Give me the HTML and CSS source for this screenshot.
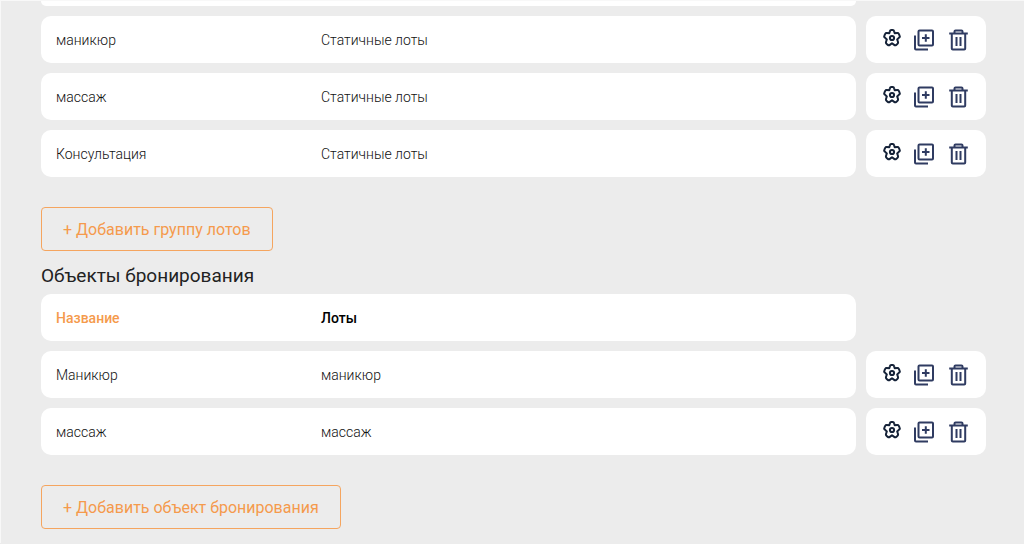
FILE: index.html
```html
<!DOCTYPE html>
<html lang="ru">
  <head>
    <meta charset="UTF-8" />
    <title>Объекты бронирования</title>
    <link rel="stylesheet" href="styles.css">
  </head>
  <body>
    <svg class="sprite" aria-hidden="true">
      <symbol id="icon-settings" viewBox="0 0 18 18">
        <path d="M6.9 2.200Q7.200 1 8.200 1H9.800Q10.800 1 11.100 2.200L11.700 4.300L14.200 4Q15.300 3.900 15.800 4.900L16.500 6.400Q17.200 7.600 16.300 8.400L14.200 10.500L15 13Q15.300 14.200 14.300 15L13.200 15.900Q12.200 16.700 11.200 15.900L9 14.300L6.800 15.900Q5.800 16.700 4.800 15.900L3.700 15Q2.700 14.200 3 13L3.800 10.500L1.700 8.400Q.8 7.600 1.500 6.400L2.200 4.900Q2.700 3.900 3.800 4L6.300 4.300Z" />
        <circle cx="9" cy="9" r="2.100" />
      </symbol>
      <symbol id="icon-copy" viewBox="0 0 20 22">
        <rect x="4.500" y="1.500" width="14.500" height="15" rx="1" />
        <path d="M11.800 5.300V12.700M8 9H15.500M1 6.500V19.500Q1 20.500 2 20.500H14" />
      </symbol>
      <symbol id="icon-trash" viewBox="0 0 22 22">
        <path d="M2.200 4.500H20.800M7.500 4V2.500Q7.500 1.500 8.500 1.500H14.500Q15.500 1.500 15.500 2.500V4M4.800 5V19.500Q4.800 20.500 5.800 20.500H17.200Q18.200 20.500 18.200 19.500V5M9.500 8V17M13.500 8V17" />
      </symbol>
    </svg>

    <main class="content">
      <div class="row-end"></div>

      <table class="list">
        <tbody>
          <tr>
            <td class="name">маникюр</td>
            <td class="lots">Статичные лоты</td>
            <td class="actions">
              <div class="card">
                <button class="settings" aria-label="Настройки"><svg><use href="#icon-settings" /></svg></button>
                <button class="copy" aria-label="Копировать"><svg><use href="#icon-copy" /></svg></button>
                <button class="trash" aria-label="Удалить"><svg><use href="#icon-trash" /></svg></button>
              </div>
            </td>
          </tr>
          <tr>
            <td class="name">массаж</td>
            <td class="lots">Статичные лоты</td>
            <td class="actions">
              <div class="card">
                <button class="settings" aria-label="Настройки"><svg><use href="#icon-settings" /></svg></button>
                <button class="copy" aria-label="Копировать"><svg><use href="#icon-copy" /></svg></button>
                <button class="trash" aria-label="Удалить"><svg><use href="#icon-trash" /></svg></button>
              </div>
            </td>
          </tr>
          <tr>
            <td class="name">Консультация</td>
            <td class="lots">Статичные лоты</td>
            <td class="actions">
              <div class="card">
                <button class="settings" aria-label="Настройки"><svg><use href="#icon-settings" /></svg></button>
                <button class="copy" aria-label="Копировать"><svg><use href="#icon-copy" /></svg></button>
                <button class="trash" aria-label="Удалить"><svg><use href="#icon-trash" /></svg></button>
              </div>
            </td>
          </tr>
        </tbody>
      </table>

      <button class="add">+ Добавить группу лотов</button>

      <h2>Объекты бронирования</h2>

      <table class="list">
        <thead>
          <tr>
            <th class="name">Название</th>
            <th class="lots">Лоты</th>
            <td class="actions"></td>
          </tr>
        </thead>
        <tbody>
          <tr>
            <td class="name">Маникюр</td>
            <td class="lots">маникюр</td>
            <td class="actions">
              <div class="card">
                <button class="settings" aria-label="Настройки"><svg><use href="#icon-settings" /></svg></button>
                <button class="copy" aria-label="Копировать"><svg><use href="#icon-copy" /></svg></button>
                <button class="trash" aria-label="Удалить"><svg><use href="#icon-trash" /></svg></button>
              </div>
            </td>
          </tr>
          <tr>
            <td class="name">массаж</td>
            <td class="lots">массаж</td>
            <td class="actions">
              <div class="card">
                <button class="settings" aria-label="Настройки"><svg><use href="#icon-settings" /></svg></button>
                <button class="copy" aria-label="Копировать"><svg><use href="#icon-copy" /></svg></button>
                <button class="trash" aria-label="Удалить"><svg><use href="#icon-trash" /></svg></button>
              </div>
            </td>
          </tr>
        </tbody>
      </table>

      <button class="add">+ Добавить объект бронирования</button>
    </main>
  </body>
</html>
```

FILE: styles.css
```css
* {
  box-sizing: border-box;
}

body {
  margin: 0;
  font-family: Roboto, sans-serif;
  font-size: 14px;
  font-weight: 300;
  color: #111;
  background-color: #ececec;
}

.sprite {
  display: none;
}

.content {
  padding: 0 38px 14px 40px;
  border-top: 1px solid #f8f8f8;
  border-left: 1px solid #f8f8f8;
}

/* bottom edge of the row scrolled off the top */
.row-end {
  height: 5px;
  margin-right: 130px;
  background-color: #fff;
  border-radius: 0 0 10px 10px;
}

.list {
  width: 100%;
  table-layout: fixed;
  border-collapse: separate;
  border-spacing: 0 10px;
}

.list th,
.list td {
  height: 47px;
  padding: 0 15px;
  text-align: left;
  background-color: #fff;
}

.list th {
  font-weight: 500;
  color: #000;
}

.list .name {
  width: 265px;
  border-radius: 10px 0 0 10px;
}

.list th.name {
  color: #f59a4c;
}

.list .lots {
  border-radius: 0 10px 10px 0;
}

.list .actions {
  width: 130px;
  padding: 0 0 0 10px;
  background-color: transparent;
}

.card {
  display: flex;
  align-items: flex-start;
  gap: 13px;
  height: 47px;
  padding: 13px 17px;
  background-color: #fff;
  border-radius: 10px;
}

.card button {
  padding: 0;
  border: none;
  background: none;
  color: #2f3b61;
  cursor: pointer;
}

.card svg {
  display: block;
  width: 100%;
  height: 100%;
  fill: none;
  stroke: currentColor;
  stroke-width: 2;
  stroke-linejoin: round;
}

.card .settings {
  width: 18px;
  height: 18px;
  color: #152238;
}

.card .copy {
  width: 20px;
  height: 22px;
}

.card .trash {
  width: 22px;
  height: 22px;
}

.add {
  display: block;
  height: 44px;
  margin-top: 20px;
  padding: 0 21px;
  border: 1px solid #f5a55f;
  border-radius: 4px;
  background: none;
  color: #f59a4c;
  font-family: inherit;
  font-size: 16px;
  font-weight: 400;
  cursor: pointer;
}

h2 {
  margin: 15px 0 -2px;
  font-size: 19px;
  line-height: 20px;
  font-weight: 400;
  color: #222;
}
```
